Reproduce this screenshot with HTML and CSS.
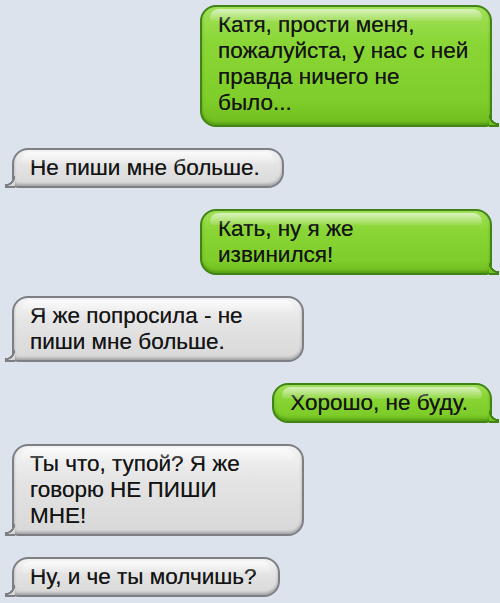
FILE: index.html
```html
<!DOCTYPE html>
<html lang="ru">
<head>
<meta charset="UTF-8" />
<meta name="viewport" content="width=device-width, initial-scale=1" />
<title>Сообщения</title>
<link rel="stylesheet" href="styles.css">
</head>
<body>

<div class="chat">
  <div class="bubble sent wide tall">Катя, прости меня,<br>пожалуйста, у нас с ней<br>правда ничего не<br>было...</div>
  <div class="bubble got">Не пиши мне больше.</div>
  <div class="bubble sent wide">Кать, ну я же<br>извинился!</div>
  <div class="bubble got wide">Я же попросила - не<br>пиши мне больше.</div>
  <div class="bubble sent">Хорошо, не буду.</div>
  <div class="bubble got wide">Ты что, тупой? Я же<br>говорю НЕ ПИШИ<br>МНЕ!</div>
  <div class="bubble got">Ну, и че ты молчишь?</div>
</div>

</body>
</html>
```

FILE: styles.css
```css
body {
  margin: 0;
  background: #dce3ed;
  font-family: 'Liberation Sans', Arial, sans-serif;
  color: #141414;
}
.chat {
  display: flex;
  flex-direction: column;
  gap: 21px;
  padding: 5px 8px 6px 12px;
}
.bubble {
  position: relative;
  width: fit-content;
  box-sizing: border-box;
  font-size: 22.5px;
  line-height: 26px;
  white-space: nowrap;
  padding: 5px 22px 5px 16px;
  border: 2px solid;
  border-radius: 16px;
  text-shadow: 0 0 0.4px rgba(0, 0, 0, 0.6);
}
.bubble.wide {
  width: 292px;
}
.bubble.tall {
  padding-bottom: 9px;
}

/* shiny band along the top */
.bubble::before {
  content: "";
  position: absolute;
  top: 2px;
  left: 8px;
  right: 8px;
  height: 12px;
  border-radius: 10px 10px 4px 4px;
  background: linear-gradient(rgba(255,255,255,0.6), rgba(255,255,255,0.08));
}

/* little curled tail */
.bubble::after {
  content: "";
  position: absolute;
  bottom: -2px;
  width: 10px;
  height: 10px;
  border-bottom: 2px solid;
}

.sent {
  align-self: flex-end;
  border-color: #3f8414;
  border-bottom-right-radius: 6px;
  background: linear-gradient(#a2e05a, #8ad636 30%, #7ecd2a 80%, #70bd1e);
  box-shadow: inset 0 -2px 3px rgba(40, 90, 0, 0.35);
}
.sent::after {
  right: -9px;
  border-color: #3f8414;
  background: radial-gradient(circle at 100% 0, transparent 8px, #3f8414 8.5px, #3f8414 10px, #74c222 10.5px);
}

.got {
  border-color: #7d7f84;
  border-bottom-left-radius: 6px;
  background: linear-gradient(#f4f4f4, #e4e4e4 40%, #d8d8d8);
  box-shadow: inset 0 -2px 3px rgba(0, 0, 0, 0.25);
}
.got::after {
  left: -9px;
  border-color: #7d7f84;
  background: radial-gradient(circle at 0 0, transparent 8px, #7d7f84 8.5px, #7d7f84 10px, #d6d6d6 10.5px);
}
```
